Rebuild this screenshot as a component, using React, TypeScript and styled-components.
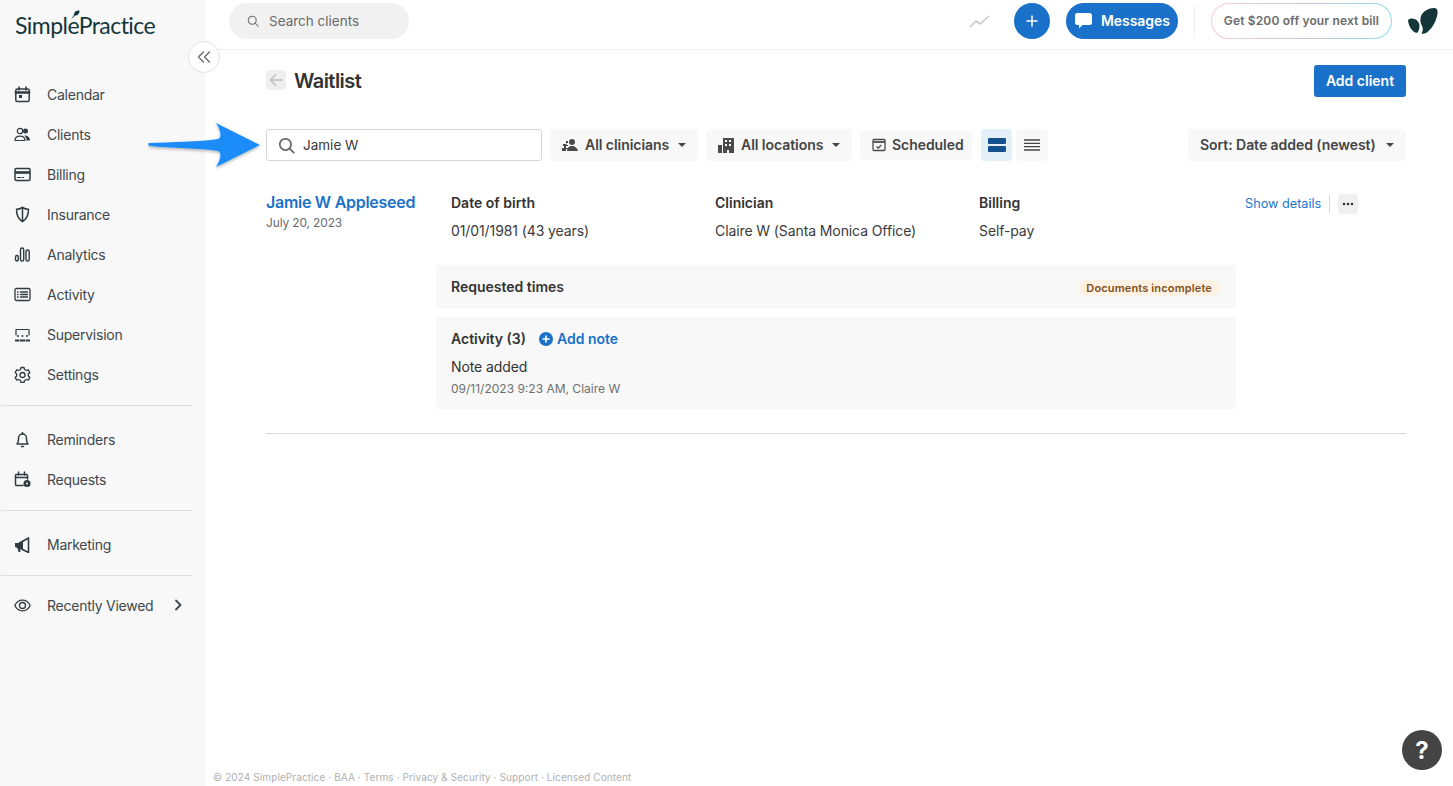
import React from 'react'
import styled, { createGlobalStyle } from 'styled-components'

const GlobalStyle = createGlobalStyle`
  html, body { margin: 0; padding: 0; height: 100%; background: #fff; }
  body { font-family: Inter, "Liberation Sans", sans-serif; color: #333; }
  #root { height: 100%; }
  * { box-sizing: border-box; }
`

const Page = styled.div`
  display: flex;
  height: 786px;
  overflow: hidden;
  position: relative;
`
const Sidebar = styled.aside`
  background: #f8f8f8;
  flex: 0 0 205px;
  padding: 0 12px 0 1px;
  position: relative;
`
const LogoRow = styled.div`
  height: 74px;
  padding: 11px 0 0 14px;
  position: relative;
`
const LogoText = styled.div`
  color: #12363a;
  font-family: Lato, sans-serif;
  font-size: 23px;
  letter-spacing: -0.55px;
  line-height: 28px;
`
const LogoLeaf = styled.svg`
  height: 9px;
  left: 69px;
  position: absolute;
  top: 10px;
  width: 10px;
`
const CollapseButton = styled.button`
  align-items: center;
  background: #fff;
  border: 1px solid #e2e2e2;
  border-radius: 50%;
  color: #666;
  display: flex;
  height: 32px;
  justify-content: center;
  padding: 0;
  position: absolute;
  right: -15px;
  top: 41px;
  width: 32px;
  z-index: 2;
`
const NavGroup = styled.nav<{ $pad: string }>`
  border-bottom: 1px solid #dedede;
  display: flex;
  flex-direction: column;
  padding: ${(p) => p.$pad};
  &:last-of-type { border-bottom: none; }
`
const NavItem = styled.a`
  align-items: center;
  color: #3e474b;
  display: flex;
  font-size: 14px;
  height: 40px;
  letter-spacing: -0.25px;
  padding-left: 13px;
`
const NavIcon = styled.span`
  align-items: center;
  color: #2f3b40;
  display: flex;
  flex: 0 0 33px;
`
const Chevron = styled.span`
  align-items: center;
  display: flex;
  margin-left: 21px;
`
const Main = styled.div`
  display: flex;
  flex: 1;
  flex-direction: column;
  min-width: 0;
`
const TopBar = styled.header`
  align-items: center;
  border-bottom: 1px solid #efefef;
  display: flex;
  height: 50px;
  padding: 3px 15px 10px 24px;
`
const GlobalSearch = styled.div`
  align-items: center;
  background: #f1f1f1;
  border-radius: 18px;
  color: #6a6a6a;
  display: flex;
  font-size: 13.5px;
  gap: 10px;
  height: 36px;
  padding-left: 18px;
  width: 180px;
`
const TopActions = styled.div`
  align-items: center;
  display: flex;
  margin-left: auto;
`
const TrendIcon = styled.svg`
  height: 16px;
  margin-right: 23px;
  width: 22px;
`
const RoundAdd = styled.button`
  align-items: center;
  background: #1a71c9;
  border: none;
  border-radius: 50%;
  color: #fff;
  display: flex;
  height: 36px;
  justify-content: center;
  margin-right: 16px;
  padding: 0;
  width: 36px;
`
const MessagesButton = styled.button`
  align-items: center;
  background: #1a71c9;
  border: none;
  border-radius: 18px;
  color: #fff;
  display: flex;
  font-family: inherit;
  font-size: 14px;
  font-weight: 600;
  gap: 9px;
  height: 36px;
  letter-spacing: -0.05px;
  padding: 0 0 1px 9px;
  width: 112px;
`
const TopDivider = styled.span`
  background: #efefef;
  height: 32px;
  margin: 0 16px;
  width: 1px;
`
const PromoPill = styled.div`
  align-items: center;
  background: linear-gradient(#fff, #fff) padding-box, linear-gradient(90deg, #f6cfd3, #c9c6d8 50%, #8fdcf2) border-box;
  border: 1px solid transparent;
  border-radius: 18px;
  color: #6b6b6b;
  display: flex;
  font-size: 12px;
  font-weight: 600;
  height: 36px;
  justify-content: center;
  letter-spacing: 0.15px;
  padding-bottom: 1px;
  width: 181px;
`
const AccountMark = styled.svg`
  height: 26px;
  margin-left: 16px;
  width: 30px;
`
const Content = styled.main`
  flex: 1;
  padding: 15px 47px 0 61px;
  position: relative;
`
const TitleRow = styled.div`
  align-items: center;
  display: flex;
  height: 32px;
`
const BackButton = styled.button`
  align-items: center;
  background: #efefef;
  border: none;
  border-radius: 4px;
  color: #bdbdbd;
  display: flex;
  height: 20px;
  justify-content: center;
  margin: 0 8px 2px 0;
  padding: 0;
  width: 20px;
`
const Title = styled.h1`
  color: #333;
  font-size: 20px;
  font-weight: 600;
  letter-spacing: -0.55px;
  margin: 0;
`
const AddClient = styled.button`
  background: #1a71c9;
  border: none;
  border-radius: 3px;
  color: #fff;
  font-family: inherit;
  font-size: 14px;
  font-weight: 600;
  height: 32px;
  margin-left: auto;
  padding: 0 0 2px;
  width: 92px;
`
const Toolbar = styled.div`
  align-items: center;
  display: flex;
  gap: 8px;
  margin-top: 32px;
`
const SearchBox = styled.div`
  align-items: center;
  border: 1px solid #d6d6d6;
  border-radius: 3px;
  color: #3a3a3a;
  display: flex;
  font-size: 13.5px;
  gap: 8px;
  height: 32px;
  padding-left: 11px;
  width: 276px;
`
const SearchBoxIcon = styled.span`
  color: #666;
  display: flex;
`
const FilterButton = styled.button<{ $width: number; $height?: number; $gap?: number }>`
  align-items: center;
  background: #f8f8f8;
  border: none;
  border-radius: 4px;
  color: #444;
  display: flex;
  font-family: inherit;
  font-size: 14px;
  font-weight: 600;
  gap: ${(p) => p.$gap ?? 7}px;
  height: ${(p) => p.$height ?? 32}px;
  letter-spacing: -0.05px;
  padding: 0 12px 1px;
  width: ${(p) => p.$width}px;
  svg { flex-shrink: 0; }
`
const Caret = styled.span`
  border-left: 4px solid transparent;
  border-right: 4px solid transparent;
  border-top: 4px solid #444;
  margin-left: auto;
`
const ViewToggle = styled.button<{ $active?: boolean }>`
  align-items: center;
  background: ${(p) => (p.$active ? '#e4f0f8' : '#f8f8f8')};
  border: none;
  border-radius: 4px;
  display: flex;
  height: 32px;
  justify-content: center;
  margin-left: ${(p) => (p.$active ? '1px' : '-4px')};
  padding: 0;
  width: ${(p) => (p.$active ? '31px' : '32px')};
`
const SortButton = styled(FilterButton)`
  margin-left: auto;
`
const Record = styled.section`
  border-bottom: 1px solid #dcdcdc;
  display: grid;
  grid-template-columns: 170px 800px 1fr;
  margin-top: 31px;
  padding-bottom: 24px;
`
const ClientName = styled.a`
  color: #1a71c9;
  display: block;
  font-size: 16px;
  font-weight: 600;
  letter-spacing: -0.28px;
  line-height: 20px;
`
const AddedDate = styled.div`
  color: #6b6b6b;
  font-size: 12px;
  letter-spacing: -0.15px;
  line-height: 18px;
  margin-top: 2px;
`
const Fields = styled.div`
  display: grid;
  grid-template-columns: repeat(3, 264px);
  height: 73px;
  padding: 2px 0 0 15px;
`
const FieldLabel = styled.div`
  color: #333;
  font-size: 14px;
  font-weight: 600;
  line-height: 18px;
`
const FieldValue = styled.div`
  color: #3a3a3a;
  font-size: 14px;
  letter-spacing: -0.1px;
  line-height: 18px;
  margin-top: 10px;
`
const Panel = styled.div`
  background: #f8f8f8;
  border-radius: 4px;
  padding: 0 15px;
`
const RequestedPanel = styled(Panel)`
  align-items: center;
  display: flex;
  height: 44px;
  justify-content: space-between;
  margin-bottom: 8px;
  padding-right: 16px;
`
const Badge = styled.span`
  background: #fdf2e3;
  border-radius: 8px;
  color: #80501a;
  font-size: 11px;
  font-weight: 600;
  letter-spacing: 0.15px;
  line-height: 16px;
  margin-top: 2px;
  padding: 0 8px;
`
const ActivityPanel = styled(Panel)`
  height: 92px;
  padding-top: 13px;
`
const ActivityHead = styled.div`
  align-items: center;
  display: flex;
  font-size: 14px;
  font-weight: 600;
  line-height: 18px;
`
const AddNote = styled.a`
  align-items: center;
  color: #1a71c9;
  display: flex;
  gap: 4px;
  margin-left: 13px;
`
const NoteText = styled.div`
  font-size: 14px;
  letter-spacing: -0.1px;
  line-height: 18px;
  margin-top: 10px;
`
const NoteMeta = styled.div`
  color: #6f6f6f;
  font-size: 12px;
  line-height: 16px;
  margin-top: 5px;
`
const RowActions = styled.div`
  align-items: center;
  display: flex;
  height: 20px;
  margin-left: 9px;
  margin-top: 2px;
`
const ShowDetails = styled.a`
  border-right: 1px solid #d8d8d8;
  color: #1a78d0;
  font-size: 12.7px;
  line-height: 18px;
  padding-right: 8px;
`
const MoreButton = styled.button`
  align-items: center;
  background: #f0f0f0;
  border: none;
  border-radius: 4px;
  display: flex;
  height: 20px;
  justify-content: center;
  margin-left: 8px;
  padding: 0;
  width: 20px;
`
const Footer = styled.footer`
  color: #b0b0b0;
  font-size: 10px;
  height: 18px;
  letter-spacing: 0.1px;
  line-height: 18px;
  padding-left: 8px;
`
const HelpButton = styled.button`
  align-items: center;
  background: #444;
  border: none;
  border-radius: 50%;
  bottom: 16px;
  color: #fff;
  display: flex;
  font-family: inherit;
  font-size: 24px;
  font-weight: 700;
  height: 40px;
  justify-content: center;
  padding: 0;
  position: absolute;
  right: 11px;
  width: 40px;
`
const Callout = styled.svg`
  height: 60px;
  left: 140px;
  position: absolute;
  top: 115px;
  width: 130px;
  z-index: 3;
`

const line = { fill: 'none', stroke: 'currentColor', strokeWidth: 1.5, strokeLinecap: 'round', strokeLinejoin: 'round' } as const

const icons: Record<string, React.ReactNode> = {
  calendar: (
    <>
      <rect x="1.800" y="3" width="13.400" height="12.500" rx="1.500" {...line} />
      <path d="M1.800 6.500h13.400" {...line} strokeWidth={2.400} />
      <path d="M5 1v3M12 1v3" {...line} />
      <rect x="5" y="9" width="3" height="3" fill="currentColor" />
    </>
  ),
  clients: (
    <>
      <circle cx="6" cy="5" r="2.700" {...line} strokeWidth={1.200} />
      <path d="M1 14.500c0-3 2.200-4.400 5-4.400s5 1.400 5 4.400z" {...line} strokeWidth={1.200} />
      <circle cx="11.500" cy="5" r="2.500" fill="currentColor" />
      <path d="M10.500 9.500c3 0 5.500 1.500 5.500 5h-3.500c0-2-.7-3.500-2-5z" fill="currentColor" />
    </>
  ),
  billing: (
    <>
      <rect x="1" y="2.500" width="15" height="12" rx="1.500" {...line} />
      <path d="M1 6.500h15" {...line} strokeWidth={2.600} strokeLinecap="butt" />
      <path d="M3.500 11.500h3M8 11.500h1.500" {...line} strokeWidth={1.200} />
    </>
  ),
  insurance: (
    <>
      <path d="M8.500 1.500c2 1.200 4 1.800 6 1.800 0 5.700-1.500 9.700-6 12.200-4.500-2.500-6-6.500-6-12.200 2 0 4-.6 6-1.800z" {...line} />
      <path d="M8.500 1.500v14" {...line} />
    </>
  ),
  analytics: (
    <>
      <rect x="1.500" y="9.500" width="2.800" height="5.500" rx="1.400" {...line} strokeWidth={1.400} />
      <rect x="6.500" y="2" width="3.200" height="13" rx="1.600" {...line} strokeWidth={1.400} />
      <rect x="12" y="4" width="3.200" height="11" rx="1.600" {...line} strokeWidth={1.400} />
    </>
  ),
  activity: (
    <>
      <rect x="1" y="2.500" width="15" height="12" rx="1.500" {...line} strokeWidth={1.300} />
      <path d="M6.500 6h7M6.500 8.500h7M6.500 11h7" {...line} strokeWidth={1.300} />
      <path d="M3.500 6h.6M3.500 8.500h.6M3.500 11h.6" {...line} strokeWidth={1.300} />
    </>
  ),
  supervision: (
    <>
      <path d="M2 9V3.500h13V9" {...line} strokeWidth={1.200} />
      <circle cx="4" cy="10" r="1" fill="currentColor" />
      <circle cx="8.500" cy="10" r="1" fill="currentColor" />
      <circle cx="13" cy="10" r="1" fill="currentColor" />
      <path d="M1 14.500h4.500M6 14.500h5M11.500 14.500H16" {...line} strokeWidth={2} strokeLinecap="butt" />
    </>
  ),
  settings: (
    <>
      <path d="M7 1.500h3l.5 2 1.800 1 2-.6 1.500 2.600-1.500 1.500v2l1.500 1.500-1.500 2.600-2-.6-1.800 1-.5 2H7l-.5-2-1.800-1-2 .6L1.200 11.500 2.700 10V8L1.200 6.500l1.500-2.600 2 .6 1.800-1z" {...line} strokeWidth={1.300} />
      <circle cx="8.500" cy="9" r="2.500" {...line} strokeWidth={1.300} />
    </>
  ),
  bell: (
    <>
      <path d="M3 13c1.200-1.300 1.500-2.500 1.500-4.500V7a4 4 0 0 1 8 0v1.500c0 2 .3 3.200 1.500 4.500z" {...line} />
      <path d="M7.500 15.500h2M8.500 1.500V3" {...line} />
    </>
  ),
  requests: (
    <>
      <path d="M9 14.500H2.500A1 1 0 0 1 1.500 13.500V4.500a1 1 0 0 1 1-1h10a1 1 0 0 1 1 1V8" {...line} />
      <path d="M1.500 6.500h12M4.500 1v3M10.500 1v3" {...line} />
      <circle cx="13" cy="12.500" r="3.500" fill="currentColor" />
      <circle cx="13" cy="12.500" r="1" fill="#f8f8f8" />
    </>
  ),
  marketing: (
    <>
      <path d="M1 7h4.500v5H3.200L1 10.800z" fill="currentColor" />
      <path d="M5.500 7l9-5v14.500l-9-4.500z" {...line} strokeWidth={1.600} />
      <path d="M3.500 12l1 4h2l-.8-4z" fill="currentColor" />
      <path d="M5 7l4-2.200v9L5 12z" fill="currentColor" />
    </>
  ),
  eye: (
    <>
      <path d="M.8 8.500C2.500 5 5.300 3.200 8.500 3.200s6 1.800 7.700 5.300c-1.700 3.500-4.500 5.300-7.700 5.300S2.500 12 .8 8.500z" {...line} strokeWidth={1.300} />
      <circle cx="8.500" cy="8.500" r="3" {...line} strokeWidth={1.300} />
    </>
  ),
}

const primaryNav = [
  ['calendar', 'Calendar'],
  ['clients', 'Clients'],
  ['billing', 'Billing'],
  ['insurance', 'Insurance'],
  ['analytics', 'Analytics'],
  ['activity', 'Activity'],
  ['supervision', 'Supervision'],
  ['settings', 'Settings'],
]
const secondaryNav = [
  ['bell', 'Reminders'],
  ['requests', 'Requests'],
]

function SideLink({ icon, label, children }: { icon: string; label: string; children?: React.ReactNode }) {
  return (
    <NavItem>
      <NavIcon>
        <svg width="17" height="17" viewBox="0 0 17 17">{icons[icon]}</svg>
      </NavIcon>
      {label}
      {children}
    </NavItem>
  )
}

function SearchGlyph({ size, weight }: { size: number; weight: number }) {
  return (
    <svg width={size} height={size} viewBox="0 0 16 16" fill="none" stroke="currentColor" strokeWidth={weight} strokeLinecap="round">
      <circle cx="7" cy="7" r="5.300" />
      <path d="M11 11l3.800 3.800" />
    </svg>
  )
}

export default function App() {
  return (
    <Page>
      <GlobalStyle />
      <Sidebar>
        <LogoRow>
          <LogoText>SimplePractice</LogoText>
          <LogoLeaf viewBox="0 0 10 9">
            <path d="M4 4.500C4 1.800 6.500.3 9.500.5 9.700 3.500 7.500 5.800 4.800 5.500 4.300 6.500 3.500 7.800 1 8.500 2.500 7.500 3.500 6.200 4 4.500z" fill="#12363a" />
          </LogoLeaf>
        </LogoRow>
        <CollapseButton aria-label="Collapse">
          <svg width="14" height="12" viewBox="0 0 14 12" fill="none" stroke="currentColor" strokeWidth="1.300" strokeLinecap="round" strokeLinejoin="round">
            <path d="M6.500 1L1.500 6l5 5M12.500 1l-5 5 5 5" />
          </svg>
        </CollapseButton>
        <NavGroup $pad="0 0 11px">
          {primaryNav.map(([icon, label]) => <SideLink key={label} icon={icon} label={label} />)}
        </NavGroup>
        <NavGroup $pad="13px 0 11px">
          {secondaryNav.map(([icon, label]) => <SideLink key={label} icon={icon} label={label} />)}
        </NavGroup>
        <NavGroup $pad="13px 0 11px">
          <SideLink icon="marketing" label="Marketing" />
        </NavGroup>
        <NavGroup $pad="9px 0 0">
          <SideLink icon="eye" label="Recently Viewed">
            <Chevron>
              <svg width="8" height="12" viewBox="0 0 8 12" fill="none" stroke="#3e474b" strokeWidth="1.800" strokeLinecap="round" strokeLinejoin="round">
                <path d="M2 1.500L6.500 6 2 10.500" />
              </svg>
            </Chevron>
          </SideLink>
        </NavGroup>
      </Sidebar>

      <Main>
        <TopBar>
          <GlobalSearch>
            <SearchGlyph size={12} weight={1.400} />
            Search clients
          </GlobalSearch>
          <TopActions>
            <TrendIcon viewBox="0 0 22 16" fill="none" stroke="#c8c8c8" strokeWidth="1.600" strokeLinejoin="round">
              <path d="M1 14l6-6 4 3 9-8" />
            </TrendIcon>
            <RoundAdd aria-label="Add">
              <svg width="12" height="12" viewBox="0 0 12 12" stroke="currentColor" strokeWidth="1.500" strokeLinecap="round">
                <path d="M6 1v10M1 6h10" />
              </svg>
            </RoundAdd>
            <MessagesButton>
              <svg width="17" height="16" viewBox="0 0 17 16" fill="currentColor">
                <path d="M2.500 0h12A2.500 2.500 0 0 1 17 2.500v7A2.500 2.500 0 0 1 14.500 12H7.500L4 15.500V12H2.500A2.500 2.500 0 0 1 0 9.500v-7A2.500 2.500 0 0 1 2.500 0z" />
              </svg>
              Messages
            </MessagesButton>
            <TopDivider />
            <PromoPill>Get $200 off your next bill</PromoPill>
            <AccountMark viewBox="0 0 30 26">
              <path d="M13 8C15 3 21 0 26 0c3 0 4 2.500 3.500 5.500-1 7-5 14.500-10 18.500-2 1.700-4 2-6 1.500 1.500-2.500 1.800-5 .5-7.500C12 15 12 11 13 8z" fill="#12363a" />
              <path d="M0 12c1.500-1.700 4-2 6.500-1 3 1.200 4.800 3.500 5 6.500.1 2.800-.6 5.500-2.500 7.500-5-1-8.500-7-9-13z" fill="#12363a" />
            </AccountMark>
          </TopActions>
        </TopBar>

        <Content>
          <TitleRow>
            <BackButton aria-label="Back">
              <svg width="14" height="12" viewBox="0 0 14 12" fill="none" stroke="currentColor" strokeWidth="1.500" strokeLinecap="round" strokeLinejoin="round">
                <path d="M6.500 1L1.500 6l5 5M1.500 6H13" />
              </svg>
            </BackButton>
            <Title>Waitlist</Title>
            <AddClient>Add client</AddClient>
          </TitleRow>

          <Toolbar>
            <SearchBox>
              <SearchBoxIcon><SearchGlyph size={17} weight={1.600} /></SearchBoxIcon>
              Jamie W
            </SearchBox>
            <FilterButton $width={148}>
              <svg width="16" height="14" viewBox="0 0 16 14" fill="#4a4a4a">
                <circle cx="10" cy="4" r="3" />
                <path d="M5 13c0-3 2-5 5-5s5.500 2 6 5z" />
                <path d="M1 6h3V3h2v2H4.500v2H6v1H4v2H6v1H4v2H0V10h2V8H1z" />
              </svg>
              All clinicians
              <Caret />
            </FilterButton>
            <FilterButton $width={146}>
              <svg width="16" height="16" viewBox="0 0 16 16" fill="#4a4a4a">
                <path d="M5 1h11v15H11v-3H9v3H5zM7 3v2h2V3zm4 0v2h2V3zM7 7v2h2V7zm4 0v2h2V7z" fillRule="evenodd" />
                <path d="M0 8h4v8H0z" />
              </svg>
              All locations
              <Caret />
            </FilterButton>
            <FilterButton $width={112} $height={30} $gap={6}>
              <svg width="14" height="14" viewBox="0 0 14 14" fill="none" stroke="#4a4a4a" strokeWidth="1.300">
                <rect x="1" y="1.500" width="12" height="11" rx="1" />
                <path d="M1 4h12" strokeWidth="1.800" />
                <path d="M4.500 8.500l1.800 1.500 3-3" />
              </svg>
              Scheduled
            </FilterButton>
            <ViewToggle $active aria-label="Card view">
              <svg width="18" height="14" viewBox="0 0 18 14" fill="#15508f">
                <rect y="0" width="18" height="6" rx="1" />
                <rect y="8" width="18" height="6" rx="1" />
              </svg>
            </ViewToggle>
            <ViewToggle aria-label="List view">
              <svg width="16" height="12" viewBox="0 0 16 12" stroke="#444" strokeWidth="1.300">
                <path d="M0 1h16M0 4.300h16M0 7.600h16M0 11h16" />
              </svg>
            </ViewToggle>
            <SortButton $width={218}>
              Sort: Date added (newest)
              <Caret />
            </SortButton>
          </Toolbar>

          <Record>
            <div>
              <ClientName>Jamie W Appleseed</ClientName>
              <AddedDate>July 20, 2023</AddedDate>
            </div>
            <div>
              <Fields>
                <div>
                  <FieldLabel>Date of birth</FieldLabel>
                  <FieldValue>01/01/1981 (43 years)</FieldValue>
                </div>
                <div>
                  <FieldLabel>Clinician</FieldLabel>
                  <FieldValue>Claire W (Santa Monica Office)</FieldValue>
                </div>
                <div>
                  <FieldLabel>Billing</FieldLabel>
                  <FieldValue>Self-pay</FieldValue>
                </div>
              </Fields>
              <RequestedPanel>
                <FieldLabel>Requested times</FieldLabel>
                <Badge>Documents incomplete</Badge>
              </RequestedPanel>
              <ActivityPanel>
                <ActivityHead>
                  Activity (3)
                  <AddNote>
                    <svg width="14" height="14" viewBox="0 0 14 14">
                      <circle cx="7" cy="7" r="7" fill="#1a71c9" />
                      <path d="M7 3.500v7M3.500 7h7" stroke="#fff" strokeWidth="1.600" />
                    </svg>
                    Add note
                  </AddNote>
                </ActivityHead>
                <NoteText>Note added</NoteText>
                <NoteMeta>09/11/2023 9:23 AM, Claire W</NoteMeta>
              </ActivityPanel>
            </div>
            <RowActions>
              <ShowDetails>Show details</ShowDetails>
              <MoreButton aria-label="More">
                <svg width="12" height="4" viewBox="0 0 12 4" fill="#333">
                  <circle cx="2" cy="2" r="1.300" />
                  <circle cx="6" cy="2" r="1.300" />
                  <circle cx="10" cy="2" r="1.300" />
                </svg>
              </MoreButton>
            </RowActions>
          </Record>
        </Content>

        <Footer>© 2024 SimplePractice · BAA · Terms · Privacy &amp; Security · Support · Licensed Content</Footer>
      </Main>

      <Callout viewBox="0 0 130 60">
        <defs>
          <filter id="calloutShadow" x="-10%" y="-20%" width="120%" height="150%">
            <feDropShadow dx="0" dy="1.500" stdDeviation="1.500" floodColor="#000" floodOpacity="0.3" />
          </filter>
        </defs>
        <path d="M9 28C30 27 60 27 78 24 82 23 81 15 76 8L120 30 76 52C81 44 82 37 78 36 60 33 30 33 10 31 8 31 8 28 9 28z" fill="#1c8cfb" filter="url(#calloutShadow)" />
      </Callout>
      <HelpButton aria-label="Help">?</HelpButton>
    </Page>
  )
}
